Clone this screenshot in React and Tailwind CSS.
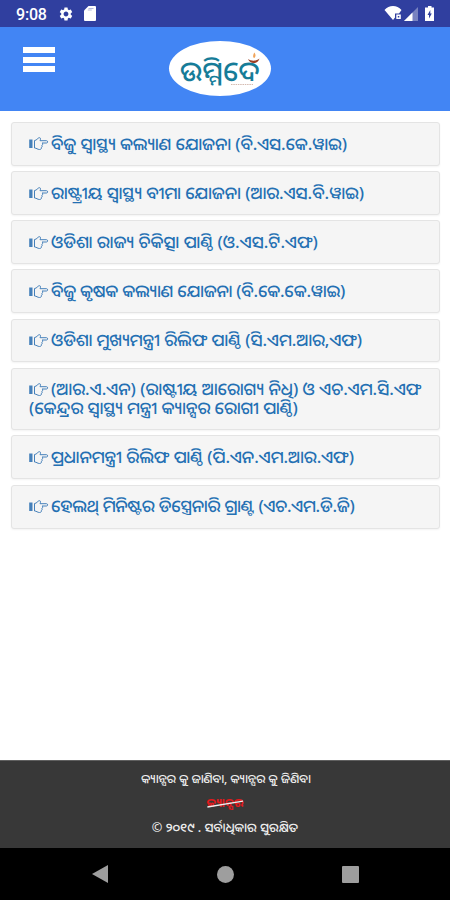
import { MdSettings } from "react-icons/md";

const schemes = [
  { lines: ["ବିଜୁ ସ୍ୱାସ୍ଥ୍ୟ କଲ୍ୟାଣ ଯୋଜନା (ବି.ଏସ.କେ.ୱାଇ)"], tracking: "tracking-[-0.13px]" },
  { lines: ["ରାଷ୍ଟ୍ରୀୟ ସ୍ୱାସ୍ଥ୍ୟ ବୀମା ଯୋଜନା (ଆର.ଏସ.ବି.ୱାଇ)"], tracking: "tracking-[-0.05px]" },
  { lines: ["ଓଡିଶା ରାଜ୍ୟ ଚିକିତ୍ସା ପାଣ୍ଠି (ଓ.ଏସ.ଟି.ଏଫ)"] },
  { lines: ["ବିଜୁ କୃଷକ କଲ୍ୟାଣ ଯୋଜନା (ବି.କେ.କେ.ୱାଇ)"], tracking: "tracking-[-0.28px]" },
  { lines: ["ଓଡିଶା ମୁଖ୍ୟମନ୍ତ୍ରୀ ରିଲିଫ ପାଣ୍ଠି (ସି.ଏମ.ଆର,ଏଫ)"], tracking: "tracking-[-0.06px]" },
  {
    lines: [
      "(ଆର.ଏ.ଏନ) (ରାଷ୍ଟୀୟ ଆରୋଗ୍ୟ ନିଧି) ଓ ଏଚ.ଏମ.ସି.ଏଫ",
      "(କେନ୍ଦ୍ରର ସ୍ୱାସ୍ଥ୍ୟ ମନ୍ତ୍ରୀ କ୍ୟାନ୍ସର ରୋଗୀ ପାଣ୍ଠି)",
    ],
  },
  { lines: ["ପ୍ରଧାନମନ୍ତ୍ରୀ ରିଲିଫ ପାଣ୍ଠି (ପି.ଏନ.ଏମ.ଆର.ଏଫ)"], tracking: "tracking-[-0.05px]" },
  { lines: ["ହେଲଥ୍ ମିନିଷ୍ଟର ଡିସ୍ତ୍ରେନାରି ଗ୍ରାଣ୍ଟ (ଏଚ.ଏମ.ଡି.ଜି)"], tracking: "tracking-[-0.25px]" },
];

function HandIcon() {
  return (
    <svg viewBox="0 0 20 16" className="mr-0.5 h-4 w-5 shrink-0" fill="none" stroke="#4580ba">
      <path d="M.2 3.500h3.300v8.500H.2z" fill="#4580ba" stroke="none" />
      <path d="M5.500 4.500C8 4.500 8.500 1.700 10.500 1.700c1.200 0 1.300 1.500.5 3H17.500c1.500 0 1.500 2.300 0 2.300h-4.500c1 .6.900 2-.2 2.300.7.800.4 2-.5 2.200.4 1.300-.4 2-1.800 2C8.500 13.500 7.500 12 5.500 12z" />
    </svg>
  );
}

function StatusIcons() {
  return (
    <svg viewBox="0 0 52 17" className="mr-[14px] ml-auto h-[17px] w-[52px]" fill="#fff">
      {/* Wifi */}
      <path d="M.5 5C5-.2 13-.2 17.500 5L15 8.500h-4v4L9 15z" />
      <path d="M12.300 9.500h4.500v4.500h-4.500zM13.800 11v1.500h1.500V11z" fillRule="evenodd" />
      {/* Signal */}
      <path d="M20 16 34 2v14z" opacity=".35" />
      <path d="M20 16l8.500-8.500V16z" />
      {/* Battery */}
      <path d="M44 1h3.500v1.500H50V16h-9V2.500h3z" />
      <path d="M46.300 5 43.500 10H45v3.500l2.800-5h-1.500z" fill="#303f9f" />
    </svg>
  );
}

function Logo() {
  return (
    <div className="relative mt-[14px] ml-[114px] h-[55px] w-[102px] rounded-[50%] bg-white text-center text-[27.5px] leading-[60px] font-medium text-[#167c98]">
      <span className="tracking-[0.4px] whitespace-nowrap">ଉମ୍ମିଦେ</span>
      {/* Lamp and tagline sit on top of the wordmark */}
      <svg viewBox="0 0 102 55" className="absolute inset-0 h-full w-full">
        <path d="M79 18c3.500 2.300 8 2.300 11.500-.5-1 5.500-9.500 6.500-11.500.5z" fill="#9b3f24" />
        <path d="M85.300 11.500c2 2.500 1.200 5-.3 5.500-1.500-1-1-3 .3-5.500z" fill="#f0a45a" />
        <path d="M62 43.500h22" stroke="#b98d7c" strokeDasharray="1.500 .8" opacity=".6" />
      </svg>
    </div>
  );
}

function SchemeCard({ lines, tracking = "tracking-normal" }) {
  return (
    <a
      href="#"
      className="block rounded-[3px] border border-[#e4e4e4] bg-[#f5f5f5] px-[17px] pt-[11.9px] pb-[11.3px] text-[17px] leading-[18.8px] font-medium text-[#2470b3] shadow-xs"
    >
      <span className={`flex h-[18.8px] items-center whitespace-nowrap ${tracking}`}>
        <HandIcon />
        {lines[0]}
      </span>
      {lines[1] && (
        <span className="block h-[18.8px] tracking-[-0.08px] whitespace-nowrap">{lines[1]}</span>
      )}
    </a>
  );
}

export default function App() {
  return (
    <div className="flex h-[900px] w-[450px] flex-col overflow-hidden bg-white font-['Noto_Sans','Noto_Sans_Oriya',sans-serif]">
      {/* Status bar */}
      <div className="flex h-[27px] items-center bg-[#303f9f] text-white">
        <span className="ml-4 pt-0.5 font-[Roboto] text-base leading-6 font-medium tracking-[-0.2px]">9:08</span>
        <MdSettings className="ml-[11px] size-4" />
        <svg viewBox="0 0 12 15" className="ml-[10px] h-[15px] w-3" fill="#fff">
          <path d="M4.500 0H11a1 1 0 0 1 1 1v13a1 1 0 0 1-1 1H1a1 1 0 0 1-1-1V4.500z" />
          <path d="M4.500 2.500h5M3.800 4h4" stroke="#303f9f" strokeWidth=".7" opacity=".5" />
        </svg>
        <StatusIcons />
      </div>

      {/* Header */}
      <header className="flex h-[84px] items-start bg-[#4285f4]">
        <div className="mt-5 ml-[23px] flex flex-col gap-[3.5px]">
          <div className="h-1.5 w-8 bg-white" />
          <div className="h-1.5 w-8 bg-white" />
          <div className="h-1.5 w-8 bg-white" />
        </div>
        <Logo />
      </header>

      <main className="flex flex-1 flex-col gap-[5.1px] pt-[11.2px] pr-[10px] pl-[11px]">
        {schemes.map((scheme) => (
          <SchemeCard key={scheme.lines[0]} lines={scheme.lines} tracking={scheme.tracking} />
        ))}
      </main>

      <footer className="flex h-[88px] flex-col items-center border-t border-[#606060] bg-[#383838] pt-1.5 text-[12.1px] leading-6 font-medium text-[#eee]">
        <p className="mr-[-2px]">କ୍ୟାନ୍ସର କୁ ଜାଣିବା, କ୍ୟାନ୍ସର କୁ ଜିଣିବା</p>
        <p className="relative font-bold text-[#e3181c]">
          କ୍ୟାନ୍ସର
          <svg viewBox="0 0 36 24" className="absolute top-0 left-0 h-6 w-full">
            <path d="M0 16 36 10" stroke="#eee" strokeWidth="1.300" />
          </svg>
        </p>
        <p className="text-[12.700px]">© ୨୦୧୯ . ସର୍ବାଧିକାର ସୁରକ୍ଷିତ</p>
      </footer>

      {/* Navigation bar */}
      <nav className="flex h-[52px] items-center justify-between bg-black pr-[91px] pl-[92px]">
        <svg viewBox="0 0 17 18" className="h-[18px] w-[17px]" fill="#9e9e9e">
          <path d="M0 9 16 0v18z" />
        </svg>
        <div className="size-[17px] rounded-full bg-[#9e9e9e]" />
        <div className="size-[17px] rounded-[1px] bg-[#9e9e9e]" />
      </nav>
    </div>
  );
}
